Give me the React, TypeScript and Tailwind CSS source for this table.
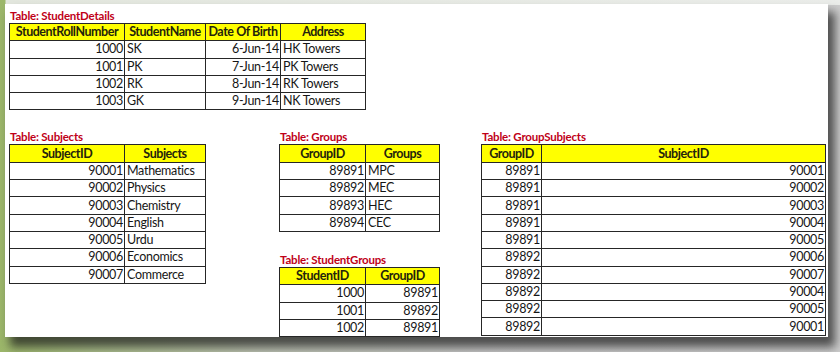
import React from "react";

type Align = "l" | "r";

function DataTable({
  title,
  headers,
  widths,
  rows,
  aligns,
}: {
  title: string;
  headers: string[];
  widths: number[];
  rows: (string | number)[][];
  aligns: Align[];
}) {
  const total = widths.reduce((a, b) => a + b, 0);
  return (
    <div className="flex flex-col">
      <div className="h-[14px] text-[11.5px] leading-[14px] font-bold tracking-[-0.2px] text-[#c00018] pl-[1px]">{title}</div>
      <table className="table-fixed border-collapse border border-[#262626]" style={{ width: total }}>
        <colgroup>
          {widths.map((w, i) => (
            <col key={i} style={{ width: w }} />
          ))}
        </colgroup>
        <thead>
          <tr className="h-[17.3px]">
            {headers.map((h, i) => (
              <th
                key={i}
                className="border border-[#262626] bg-[#ffff00] p-0 text-center text-[12.5px] leading-[16px] font-bold tracking-[-0.45px] text-[#24240c] whitespace-nowrap"
              >
                {h}
              </th>
            ))}
          </tr>
        </thead>
        <tbody>
          {rows.map((r, ri) => (
            <tr key={ri} className="h-[17.3px]">
              {r.map((c, ci) => (
                <td
                  key={ci}
                  className={
                    "border border-[#262626] p-0 text-[12.5px] leading-[16px] tracking-[-0.3px] text-[#161616] whitespace-nowrap " +
                    (aligns[ci] === "r" ? "text-right pr-[1px]" : "text-left pl-[2px]")
                  }
                >
                  {c}
                </td>
              ))}
            </tr>
          ))}
        </tbody>
      </table>
    </div>
  );
}

export default function App() {
  return (
    <div
      className="w-[840px] h-[352px] overflow-hidden relative"
      style={{ fontFamily: "Lato, 'Open Sans', sans-serif" }}
    >
      <div className="absolute inset-0 bg-[linear-gradient(to_right,#9cb76a_0px,#a9bd88_90px,#bcc2b2_260px,#c6c6c6_480px,#cdcdcd_840px)]" />
      <div className="absolute left-0 right-0 top-0 h-[5px] bg-[linear-gradient(to_right,#9cb76a_0px,#9cb76a_5px,#e3e7de_6px,#ebedea_840px)]" />
      <div className="relative ml-[5px] mt-[4px] w-[823px] h-[333px] bg-white overflow-hidden shadow-[6px_9px_9px_1px_rgba(25,25,25,0.7)]">
        <div className="flex flex-col pl-[4px] pt-[5px]">
          <DataTable
            title="Table: StudentDetails"
            headers={["StudentRollNumber", "StudentName", "Date Of Birth", "Address"]}
            widths={[115, 81, 75, 85]}
            aligns={["r", "l", "r", "l"]}
            rows={[
              [1000, "SK", "6-Jun-14", "HK Towers"],
              [1001, "PK", "7-Jun-14", "PK Towers"],
              [1002, "RK", "8-Jun-14", "RK Towers"],
              [1003, "GK", "9-Jun-14", "NK Towers"],
            ]}
          />
          <div className="flex mt-[20px]">
            <div className="w-[196px]">
              <DataTable
                title="Table: Subjects"
                headers={["SubjectID", "Subjects"]}
                widths={[115, 81]}
                aligns={["r", "l"]}
                rows={[
                  [90001, "Mathematics"],
                  [90002, "Physics"],
                  [90003, "Chemistry"],
                  [90004, "English"],
                  [90005, "Urdu"],
                  [90006, "Economics"],
                  [90007, "Commerce"],
                ]}
              />
            </div>
            <div className="ml-[74px] w-[160px] flex flex-col gap-[21px]">
              <DataTable
                title="Table: Groups"
                headers={["GroupID", "Groups"]}
                widths={[86, 74]}
                aligns={["r", "l"]}
                rows={[
                  [89891, "MPC"],
                  [89892, "MEC"],
                  [89893, "HEC"],
                  [89894, "CEC"],
                ]}
              />
              <DataTable
                title="Table: StudentGroups"
                headers={["StudentID", "GroupID"]}
                widths={[86, 74]}
                aligns={["r", "r"]}
                rows={[
                  [1000, 89891],
                  [1001, 89892],
                  [1002, 89891],
                  ["", ""],
                ]}
              />
            </div>
            <div className="ml-[42px] w-[344px]">
              <DataTable
                title="Table: GroupSubjects"
                headers={["GroupID", "SubjectID"]}
                widths={[60, 284]}
                aligns={["r", "r"]}
                rows={[
                  [89891, 90001],
                  [89891, 90002],
                  [89891, 90003],
                  [89891, 90004],
                  [89891, 90005],
                  [89892, 90006],
                  [89892, 90007],
                  [89892, 90004],
                  [89892, 90005],
                  [89892, 90001],
                ]}
              />
            </div>
          </div>
        </div>
      </div>
    </div>
  );
}
